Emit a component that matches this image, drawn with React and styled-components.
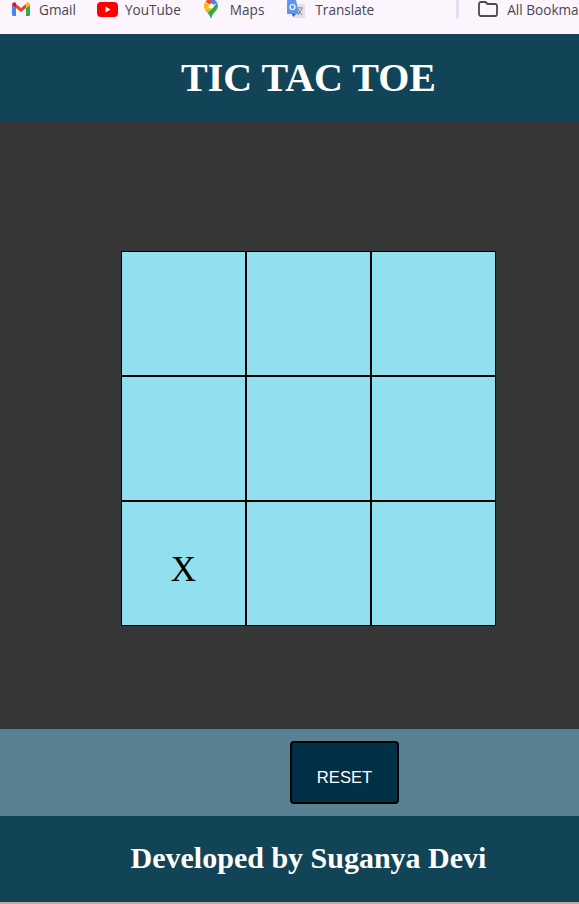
import React from "react";
import styled, { createGlobalStyle } from "styled-components";

const board = ["", "", "", "", "", "", "X", "", ""];

const GlobalStyle = createGlobalStyle`
  html, body {
    margin: 0;
    padding: 0;
    background: #b9aca6;
  }
`;

const Page = styled.div`
  width: 579px;
  height: 902px;
  display: flex;
  flex-direction: column;
  overflow: hidden;
`;

const BookmarkBar = styled.div`
  height: 34px;
  flex: none;
  background: #fdf5fe;
  display: flex;
  align-items: flex-start;
  padding: 0 0 0 12px;
  box-sizing: border-box;
  overflow: hidden;
  white-space: nowrap;
  font-family: "Open Sans", "Noto Sans", sans-serif;
  font-size: 13.6px;
  color: #474750;
`;

const Bookmark = styled.div`
  display: flex;
  align-items: center;
  gap: ${(p) => p.$gap}px;
  height: 18px;
  margin-right: ${(p) => p.$right}px;
  flex: none;
`;

const Divider = styled.div`
  width: 3px;
  height: 18px;
  background: #e7dcf8;
  margin-right: 19px;
  flex: none;
`;

const Header = styled.header`
  height: 87px;
  flex: none;
  box-sizing: border-box;
  background: #124458;
  color: #fff;
  display: flex;
  align-items: center;
  justify-content: center;
  padding-left: 38px;
`;

const Title = styled.h1`
  margin: 0;
  font-family: "Liberation Serif", serif;
  font-size: 40px;
  font-weight: 700;
`;

const Main = styled.main`
  height: 608px;
  flex: none;
  box-sizing: border-box;
  background: #363636;
  padding: 130px 0 0 121px;
`;

const Board = styled.div`
  width: 375px;
  height: 375px;
  display: grid;
  grid-template-columns: repeat(3, 125px);
  grid-template-rows: repeat(3, 125px);
`;

const Cell = styled.div`
  box-sizing: border-box;
  border: 1px solid #000;
  background: #90e0ef;
  color: #000;
  font-family: "Liberation Serif", serif;
  font-size: 35px;
  display: flex;
  align-items: center;
  justify-content: center;
  padding-top: 13px;
`;

const ResetBar = styled.div`
  height: 87px;
  flex: none;
  box-sizing: border-box;
  background: #588291;
  padding: 12px 0 0 290px;
`;

const ResetButton = styled.button`
  width: 109px;
  height: 63px;
  box-sizing: border-box;
  background: #023047;
  border: 2px solid #000;
  border-radius: 4px;
  color: #fff;
  font-family: "Liberation Sans", Arial, sans-serif;
  font-size: 16.600px;
  padding: 11px 0 0;
`;

const Footer = styled.footer`
  height: 86px;
  flex: none;
  box-sizing: border-box;
  background: #124458;
  color: #fff;
  display: flex;
  align-items: center;
  justify-content: center;
  padding: 0 0 2px 38px;
`;

const Credit = styled.h2`
  margin: 0;
  font-family: "Liberation Serif", serif;
  font-size: 30px;
  font-weight: 700;
`;

const GmailIcon = () => (
  <svg width="18" height="14" viewBox="0 0 18 14">
    <path d="M0 3v9.500a1.500 1.500 0 0 0 1.500 1.500H4V6z" fill="#4285f4" />
    <path d="M14 6v8h2.500a1.500 1.500 0 0 0 1.500-1.500V3z" fill="#34a853" />
    <path d="M4 6v-4l5 4 5-4v4l-5 4z" fill="#ea4335" />
    <path d="M0 3c0-2.500 2.500-3.500 4-2v5z" fill="#c5221f" />
    <path d="M14 1c1.500-1.500 4-.5 4 2l-4 3z" fill="#fbbc04" />
  </svg>
);

const YoutubeIcon = () => (
  <svg width="21" height="15" viewBox="0 0 21 15">
    <rect width="21" height="15" rx="4" fill="#f00" />
    <path d="M8.500 4.500v6l5-3z" fill="#fff" />
  </svg>
);

const MapsIcon = () => (
  <svg width="14" height="20" viewBox="0 0 14 20">
    <path d="M7 0a7 7 0 0 0-5.300 2.400L7 7z" fill="#ea4335" />
    <path d="M7 0a7 7 0 0 1 6.300 4L7 7z" fill="#4285f4" />
    <path d="M1.700 2.400A7 7 0 0 0 .9 10.500L7 7z" fill="#fbbc04" />
    <path d="M13.300 4A7 7 0 0 1 12.500 11L4 13z" fill="#34a853" />
    <path d="M.9 10.500C2.500 13 5.500 15 7 20c1.500-5 3.500-6.500 5.500-9z" fill="#34a853" />
    <path d="M.9 10.500 7 7l2 2-5 4.500z" fill="#fbbc04" />
    <circle cx="7" cy="7" r="2.500" fill="#fff" />
  </svg>
);

const TranslateIcon = () => (
  <svg width="18" height="19" viewBox="0 0 18 19">
    <rect x="6" y="4" width="12" height="14" rx="1" fill="#dfe3e6" />
    <path d="M10 8h6M13 7v1M11 15l4-6M11 9l4 6" stroke="#7b8287" strokeWidth="1" fill="none" />
    <path d="M1 0h8l3 14H6H1a1 1 0 0 1-1-1V1a1 1 0 0 1 1-1z" fill="#5a95ee" />
    <path d="M6 17l3-3H5z" fill="#2a56c6" />
    <circle cx="5.500" cy="7" r="2.500" fill="none" stroke="#fff" strokeWidth="1.200" />
  </svg>
);

const FolderIcon = () => (
  <svg width="20" height="16" viewBox="0 0 20 16">
    <path
      d="M1 3a2 2 0 0 1 2-2h4.500l2 2H17a2 2 0 0 1 2 2v8a2 2 0 0 1-2 2H3a2 2 0 0 1-2-2z"
      fill="none"
      stroke="#4a4a50"
      strokeWidth="1.800"
    />
  </svg>
);

const App = () => {
  return (
    <Page>
      <GlobalStyle />
      <BookmarkBar>
        <Bookmark $gap={9} $right={21}>
          <GmailIcon />
          Gmail
        </Bookmark>
        <Bookmark $gap={7} $right={23}>
          <YoutubeIcon />
          YouTube
        </Bookmark>
        <Bookmark $gap={12} $right={23}>
          <MapsIcon />
          Maps
        </Bookmark>
        <Bookmark $gap={10} $right={82}>
          <TranslateIcon />
          Translate
        </Bookmark>
        <Divider />
        <Bookmark $gap={9} $right={0}>
          <FolderIcon />
          All Bookmarks
        </Bookmark>
      </BookmarkBar>
      <Header>
        <Title>TIC TAC TOE</Title>
      </Header>
      <Main>
        <Board>
          {board.map((value, i) => (
            <Cell key={i}>{value}</Cell>
          ))}
        </Board>
      </Main>
      <ResetBar>
        <ResetButton>RESET</ResetButton>
      </ResetBar>
      <Footer>
        <Credit>Developed by Suganya Devi</Credit>
      </Footer>
    </Page>
  );
};

export default App;
